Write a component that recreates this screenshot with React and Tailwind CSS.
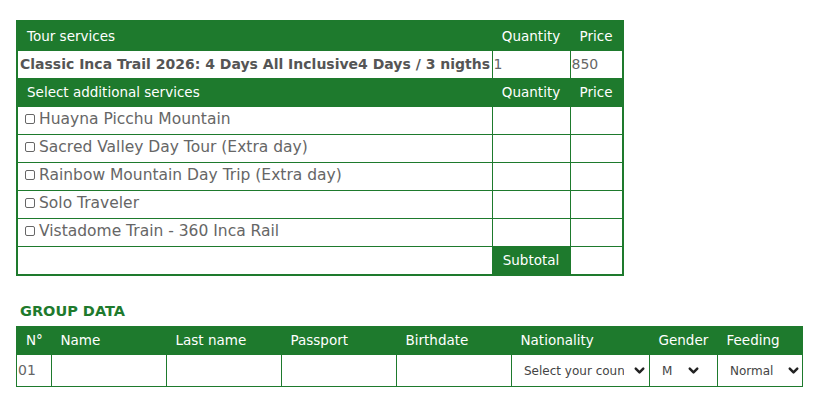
import { ChevronDown } from 'lucide-react'

const services = [
  'Huayna Picchu Mountain',
  'Sacred Valley Day Tour (Extra day)',
  'Rainbow Mountain Day Trip (Extra day)',
  'Solo Traveler',
  'Vistadome Train - 360 Inca Rail',
]

const groupCols = [
  { label: 'N°', w: 'w-[35px]' },
  { label: 'Name', w: 'w-[115px]' },
  { label: 'Last name', w: 'w-[115px]' },
  { label: 'Passport', w: 'w-[115px]' },
  { label: 'Birthdate', w: 'w-[115px]' },
  { label: 'Nationality', w: 'w-[138px]' },
  { label: 'Gender', w: 'w-[68px]' },
  { label: 'Feeding', w: 'w-[85px]' },
]

function SelectBox({ value, textW }) {
  return (
    <div className="flex h-full items-center gap-[8px] pl-[12px] text-[12px] text-[#444]">
      <span className={`overflow-hidden whitespace-nowrap ${textW}`}>{value}</span>
      <ChevronDown size={15} strokeWidth={4} className="shrink-0 text-[#222]" />
    </div>
  )
}

export default function App() {
  return (
    <div className="min-h-[407px] bg-white pl-4 pt-5 font-['DejaVu_Sans',sans-serif] text-[#666]">
      {/* tour services */}
      <table className="w-[606px] table-fixed border-collapse border-2 border-[#1e7a2d] text-[13.5px]">
        <colgroup>
          <col className="w-[475px]" />
          <col className="w-[78px]" />
          <col className="w-[53px]" />
        </colgroup>
        <tbody>
          <tr className="h-[29px] bg-[#1e7a2d] text-white">
            <td className="px-[9px]">Tour services</td>
            <td className="text-center">Quantity</td>
            <td className="text-center">Price</td>
          </tr>
          <tr className="h-[28px]">
            <td className="whitespace-nowrap border border-[#1e7a2d] pl-[2px] text-[14px] font-bold text-[#555]">
              Classic Inca Trail 2026: 4 Days All Inclusive4 Days / 3 nigths
            </td>
            <td className="border border-[#1e7a2d] pl-[1px] text-[14px]">1</td>
            <td className="border border-[#1e7a2d] pl-[1px] text-[14px]">850</td>
          </tr>
          <tr className="h-[28px] bg-[#1e7a2d] text-white">
            <td className="px-[9px]">Select additional services</td>
            <td className="text-center">Quantity</td>
            <td className="text-center">Price</td>
          </tr>
          {services.map((s) => (
            <tr key={s} className="h-[28px]">
              <td className="border border-[#1e7a2d] pl-[7px] text-[15.5px]">
                <span className="mr-[4px] inline-block h-[10px] w-[10px] rounded-[2px] border border-[#666] align-[0px]" />
                {s}
              </td>
              <td className="border border-[#1e7a2d]" />
              <td className="border border-[#1e7a2d]" />
            </tr>
          ))}
          <tr className="h-[29px]">
            <td className="border border-[#1e7a2d]" />
            <td className="bg-[#1e7a2d] text-center text-white">Subtotal</td>
            <td className="border border-[#1e7a2d]" />
          </tr>
        </tbody>
      </table>

      <h3 className="mt-[25px] pl-1 text-[14.5px] font-bold leading-5 text-[#1e7a2d]">GROUP DATA</h3>

      <table className="mt-[5px] w-[786px] table-fixed border-collapse border border-[#1e7a2d] text-[13.5px]">
        <colgroup>
          {groupCols.map((c) => (
            <col key={c.label} className={c.w} />
          ))}
        </colgroup>
        <tbody>
          <tr className="h-[28px] bg-[#1e7a2d] text-white">
            {groupCols.map((c) => (
              <td key={c.label} className="px-[9px]">
                {c.label}
              </td>
            ))}
          </tr>
          <tr className="h-[32px]">
            <td className="border border-[#1e7a2d] pl-[1px] text-[14px]">01</td>
            <td className="border border-[#1e7a2d]" />
            <td className="border border-[#1e7a2d]" />
            <td className="border border-[#1e7a2d]" />
            <td className="border border-[#1e7a2d]" />
            <td className="border border-[#1e7a2d] p-0">
              <SelectBox value="Select your coun" textW="w-[100px]" />
            </td>
            <td className="border border-[#1e7a2d] p-0">
              <SelectBox value="M" textW="w-[16px]" />
            </td>
            <td className="border border-[#1e7a2d] p-0">
              <SelectBox value="Normal" textW="w-[48px]" />
            </td>
          </tr>
        </tbody>
      </table>
    </div>
  )
}
